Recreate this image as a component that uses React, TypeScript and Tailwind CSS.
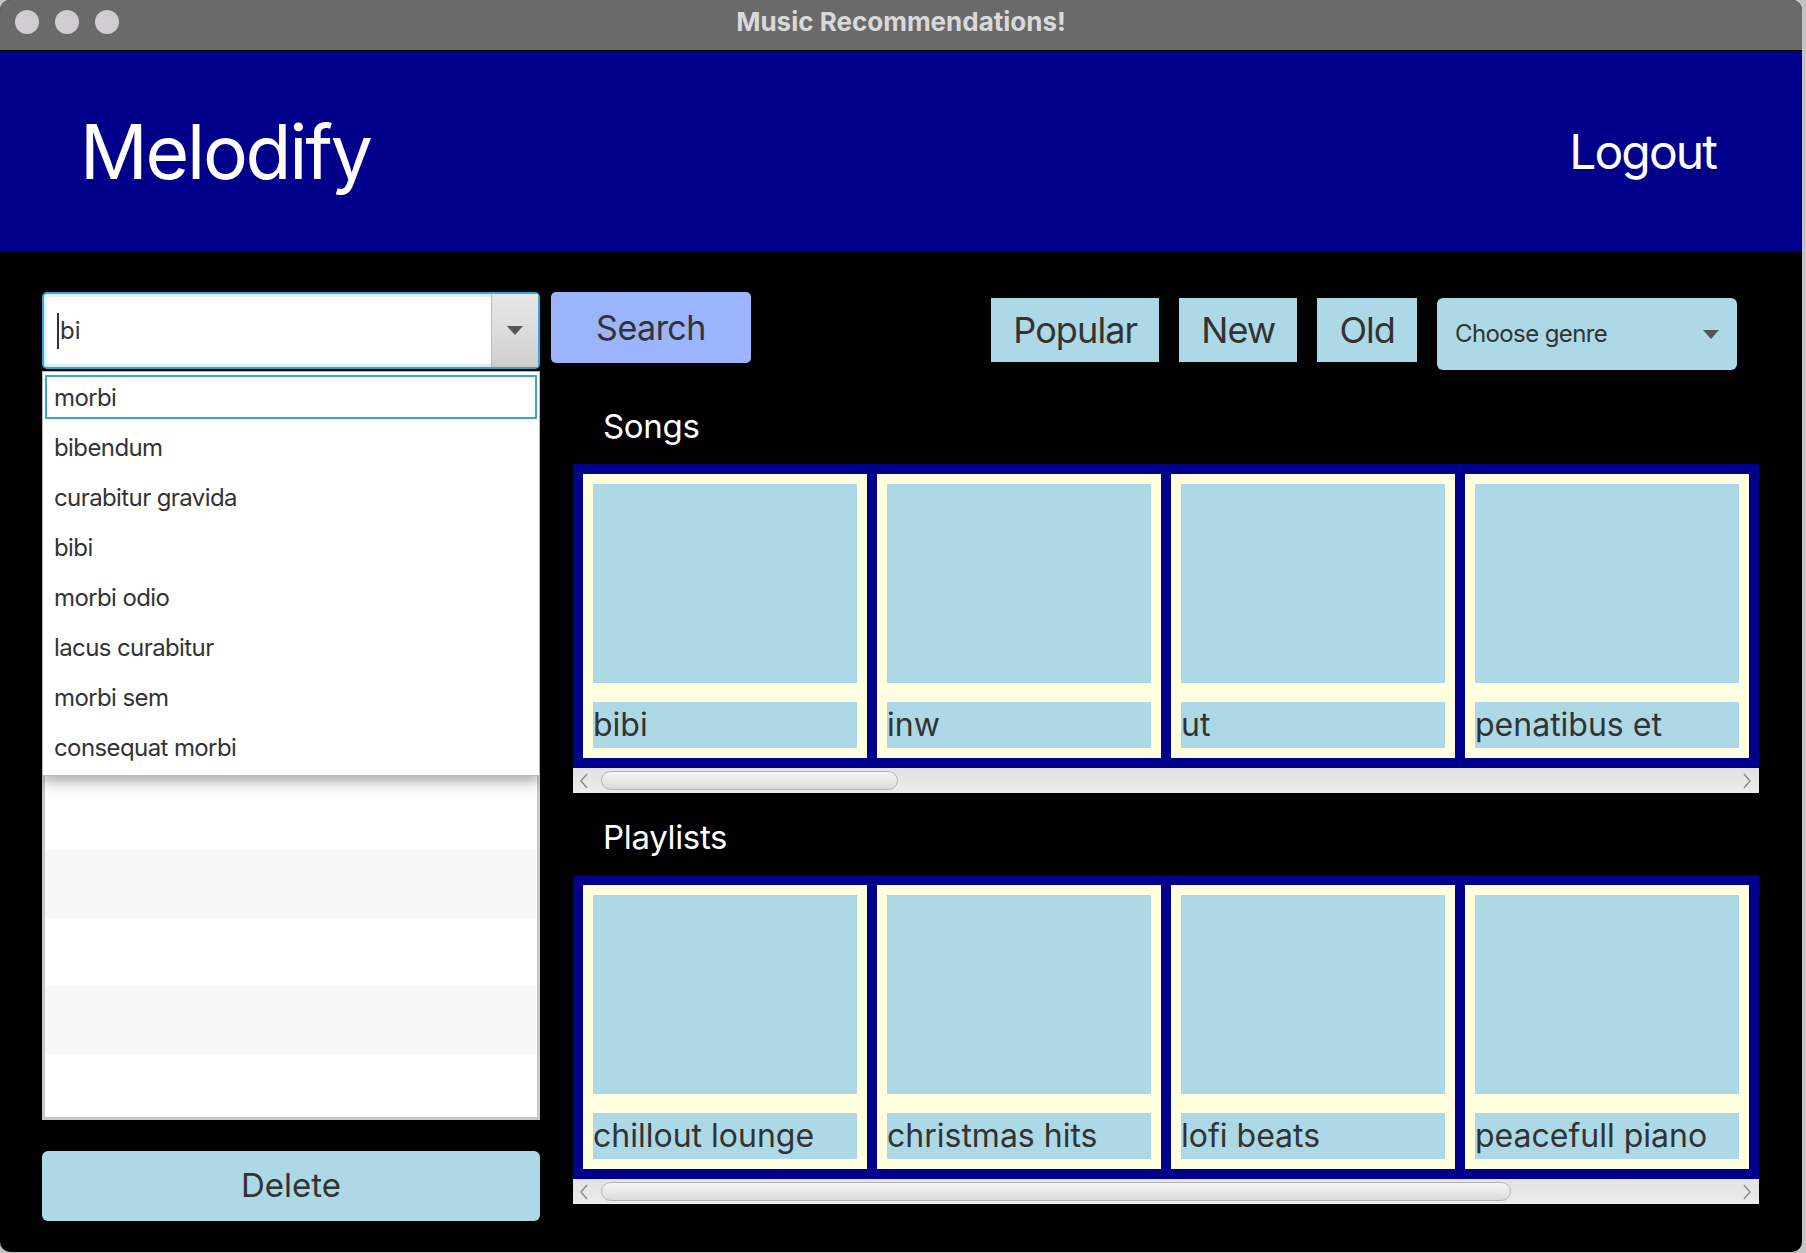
import React from "react";

const songs = ["bibi", "inw", "ut", "penatibus et"];
const playlists = ["chillout lounge", "christmas hits", "lofi beats", "peacefull piano"];
const suggestions = [
  "morbi",
  "bibendum",
  "curabitur gravida",
  "bibi",
  "morbi odio",
  "lacus curabitur",
  "morbi sem",
  "consequat morbi",
];

const Triangle = ({ color = "#555" }: { color?: string }) => (
  <svg width="16" height="9" viewBox="0 0 16 9">
    <polygon points="0,0 16,0 8,9" fill={color} />
  </svg>
);

const Chevron = ({ dir }: { dir: "left" | "right" }) => (
  <svg width="8" height="16" viewBox="0 0 8 16" className="shrink-0">
    <polyline
      points={dir === "left" ? "7,1 1,8 7,15" : "1,1 7,8 1,15"}
      fill="none"
      stroke="#8a8a8a"
      strokeWidth="1.4"
    />
  </svg>
);

const ScrollBar = ({ thumb }: { thumb: string }) => (
  <div className="flex h-[25px] items-center bg-gradient-to-b from-[#e2e2e2] to-[#ececec] pl-[7px] pr-[8px]">
    <Chevron dir="left" />
    <div className={`ml-[13px] h-[19px] rounded-full border border-[#b4b4b4] bg-gradient-to-b from-[#f5f5f5] to-[#dbdbdb] ${thumb}`} />
    <div className="flex-1" />
    <Chevron dir="right" />
  </div>
);

const Card = ({ title }: { title: string }) => (
  <div className="flex h-[284px] w-[284px] shrink-0 flex-col bg-[#ffffe0] p-[10px]">
    <div className="h-[199px] bg-[#add8e6]" />
    <div className="mt-[19px] h-[46px] overflow-hidden whitespace-nowrap bg-[#add8e6] text-[32px] leading-[46px] text-[#333]">
      {title}
    </div>
  </div>
);

const Section = ({ label, items, thumb }: { label: string; items: string[]; thumb: string }) => (
  <div>
    <div className="h-[40px] pl-[30px] text-[33px] leading-[40px] tracking-[-0.01em] text-white">{label}</div>
    <div className="mt-[18px] flex gap-[10px] bg-[#00008b] p-[10px]">
      {items.map((t) => (
        <Card key={t} title={t} />
      ))}
    </div>
    <ScrollBar thumb={thumb} />
  </div>
);

const FilterButton = ({ label }: { label: string }) => (
  <button className="h-[64px] bg-[#add8e6] px-[22px] text-[36px] tracking-[-0.025em] text-[#333]">{label}</button>
);

export default function App() {
  return (
    <div className="min-h-screen bg-[#c4c4c4] font-['Inter',sans-serif]">
      <div className="flex h-[1252px] w-[1802px] flex-col overflow-hidden rounded-[10px] bg-black">
        {/* Title bar */}
        <div className="grid h-[51px] grid-cols-[1fr_auto_1fr] items-center border-b border-black bg-[#6b6a6b] pb-[6px]">
          <div className="flex gap-[16px] pl-[15px]">
            <span className="h-[24px] w-[24px] rounded-full bg-[#cfcdcf]" />
            <span className="h-[24px] w-[24px] rounded-full bg-[#cfcdcf]" />
            <span className="h-[24px] w-[24px] rounded-full bg-[#cfcdcf]" />
          </div>
          <div className="text-[26px] font-bold leading-none text-[#d9d9d9]">Music Recommendations!</div>
          <div />
        </div>

        {/* Header */}
        <div className="flex h-[201px] items-center justify-between bg-[#00008b] pl-[80px] pr-[86px] text-white">
          <div className="text-[75px] leading-none tracking-[-0.03em]">Melodify</div>
          <div className="text-[48px] leading-none tracking-[-0.04em]">Logout</div>
        </div>

        {/* Body */}
        <div className="flex flex-1 pt-[40px]">
          {/* Left column */}
          <div className="relative ml-[42px] flex w-[498px] flex-col">
            <div className="flex h-[77px] rounded-[5px] border-2 border-[#39a7d5] bg-white shadow-[inset_0_0_0_3px_#e0f1f9]">
              <div className="flex flex-1 items-center pl-[13px] text-[24px] text-[#333]">
                <span className="mr-[1px] inline-block h-[36px] w-[2px] bg-[#333]" />
                bi
              </div>
              <div className="flex w-[47px] items-center justify-center border-l border-[#b8b8b8] bg-gradient-to-b from-[#e8e8e8] to-[#d0d0d0]">
                <Triangle />
              </div>
            </div>

            <div className="mt-[2px] h-[749px] overflow-hidden border-[3px] border-[#c8c8c8] bg-white">
              {Array.from({ length: 11 }).map((_, i) => (
                <div key={i} className={`h-[68px] ${i % 2 === 1 ? "bg-[#f8f8f8]" : "bg-white"}`} />
              ))}
            </div>

            <button className="mt-[31px] h-[70px] rounded-[6px] bg-[#add8e6] text-[33px] text-[#333]">
              Delete
            </button>

            {/* Suggestions popup */}
            <div className="absolute left-0 top-[79px] z-10 w-full border border-[#b9b9b9] bg-white pb-[1px] pt-[2px] shadow-[0_6px_14px_rgba(0,0,0,0.3)]">
              {suggestions.map((s, i) => (
                <div key={s} className="h-[50px] px-[2px] pt-[1px]">
                  <div
                    className={`h-[44px] border-2 pl-[7px] text-[24px] leading-[42px] tracking-[-0.025em] text-[#333] ${
                      i === 0 ? "border-[#39a7d5]" : "border-transparent"
                    }`}
                  >
                    {s}
                  </div>
                </div>
              ))}
            </div>
          </div>

          {/* Right column */}
          <div className="ml-[11px] mr-[43px] flex flex-1 flex-col">
            <div className="flex items-start pr-[22px]">
              <button className="h-[71px] w-[200px] rounded-[5px] bg-[#9bb4fb] text-[34px] tracking-[-0.015em] text-[#333]">
                Search
              </button>
              <div className="ml-auto mt-[6px] flex items-start gap-[20px]">
                <FilterButton label="Popular" />
                <FilterButton label="New" />
                <FilterButton label="Old" />
                <div className="flex h-[72px] w-[300px] items-center justify-between rounded-[6px] bg-[#add8e6] pl-[18px] pr-[18px] text-[24px] tracking-[-0.025em] text-[#333]">
                  <span>Choose genre</span>
                  <Triangle />
                </div>
              </div>
            </div>

            <div className="ml-[22px] mt-[36px]">
              <Section label="Songs" items={songs} thumb="w-[297px]" />
              <div className="mt-[24px]">
                <Section label="Playlists" items={playlists} thumb="w-[910px]" />
              </div>
            </div>
          </div>
        </div>
      </div>
    </div>
  );
}
